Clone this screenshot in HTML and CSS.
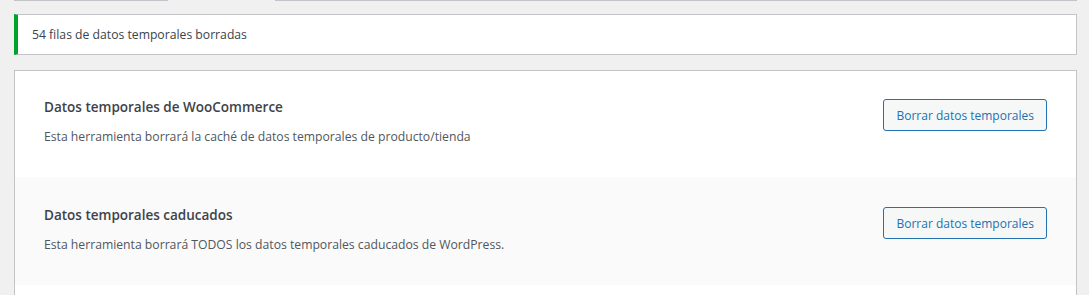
FILE: index.html
```html
<html>
	<head>
		<link rel="stylesheet" href="styles.css">
	</head>

	<body>
		<div class="wrap">
			<div class="tabline">
				<div class="seg seg-first"></div>
				<div class="seg-gap"></div>
				<div class="seg seg-rest"></div>
			</div>

			<div class="notice notice-success">
				<p>54 filas de datos temporales borradas</p>
			</div>

			<div class="tools">
				<div class="tool">
					<div class="tool-info">
						<strong class="tool-name">Datos temporales de WooCommerce</strong>
						<p class="description">Esta herramienta borrará la caché de datos temporales de producto/tienda</p>
					</div>
					<button class="button">Borrar datos temporales</button>
				</div>
				<div class="tool alt">
					<div class="tool-info">
						<strong class="tool-name">Datos temporales caducados</strong>
						<p class="description">Esta herramienta borrará TODOS los datos temporales caducados de WordPress.</p>
					</div>
					<button class="button">Borrar datos temporales</button>
				</div>
			</div>
		</div>
	</body>
</html>
```

FILE: styles.css
```css
body,
html {
	margin: 0;
	background-color: #f0f0f1;
	color: #3c434a;
	font-family: "Open Sans", "Noto Sans", sans-serif;
	font-size: 12.2px;
	overflow: hidden;
}

.wrap {
	padding: 0 12px 0 14px;
}

.tabline {
	display: flex;
	height: 1px;
	margin-bottom: 13px;
}

.seg {
	background-color: #c3c4c7;
}

.seg-first {
	width: 154px;
}

.seg-gap {
	width: 107px;
}

.seg-rest {
	flex: 1;
}

.notice {
	background-color: #fff;
	border: 1px solid #c3c4c7;
	border-left: 4px solid #00a32a;
	padding: 10px 14px;
	margin-bottom: 15px;
}

.notice p {
	margin: 0;
	line-height: 19px;
}

.tools {
	background-color: #fff;
	border: 1px solid #c3c4c7;
	border-bottom: none;
	padding-bottom: 40px;
}

.tool {
	display: flex;
	justify-content: space-between;
	align-items: flex-start;
	padding: 27px 29px 31px 29px;
}

.tool.alt {
	background-color: #fafafa;
	padding-top: 29px;
	padding-bottom: 31px;
}

.tool-name {
	display: block;
	font-size: 13.5px;
	font-weight: 600;
	line-height: 19px;
	color: #3c434a;
}

.description {
	margin: 10px 0 0;
	line-height: 19px;
	color: #50575e;
}

.button {
	margin-top: 1px;
	height: 32px;
	padding: 0 12px;
	font-family: inherit;
	font-size: 12px;
	color: #2271b1;
	background-color: #f6f7f7;
	border: 1px solid #2271b1;
	border-radius: 3px;
	cursor: pointer;
}
```
